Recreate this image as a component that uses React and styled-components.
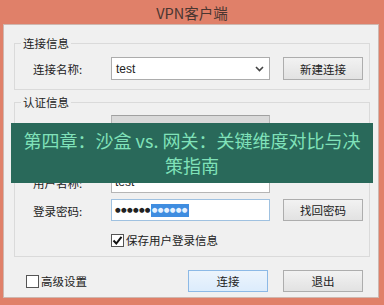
import React from 'react'
import styled, { createGlobalStyle } from 'styled-components'

const GlobalStyle = createGlobalStyle`
    body{
        margin:0;
        font-family: "Noto Sans CJK SC", "Liberation Sans", sans-serif;
        color:#1e1e1e;
    }
`

function App() {
    return (
        <>
            <GlobalStyle />
            <Window>
                <TitleBar>VPN客户端</TitleBar>
                <Client>
                    <Group>
                        <Legend>连接信息</Legend>
                        <GroupBody $top={7} $bottom={9}>
                            <Row $h={23}>
                                <Label>连接名称:</Label>
                                <Combo>
                                    <span>test</span>
                                    <Chevron />
                                </Combo>
                                <Button>新建连接</Button>
                            </Row>
                        </GroupBody>
                    </Group>

                    <Group $mt={5}>
                        <Legend>认证信息</Legend>
                        <GroupBody $top={6} $bottom={9} $gap={6}>
                            <Row $h={22}>
                                <span />
                                <Field $disabled />
                            </Row>
                            <Row $h={22}>
                                <span />
                                <Field />
                            </Row>
                            <Row $h={22}>
                                <Label>用户名称:</Label>
                                <Field>test</Field>
                            </Row>
                            <Row $h={22}>
                                <Label>登录密码:</Label>
                                <Field $focus>
                                    <Dots>●●●●●●</Dots>
                                    <Selected>●●●●●●</Selected>
                                </Field>
                                <Button>找回密码</Button>
                            </Row>
                            <CheckRow $indent={78} $mt={6}>
                                <CheckBox $checked />
                                保存用户登录信息
                            </CheckRow>
                        </GroupBody>
                    </Group>

                    <Footer>
                        <CheckRow $indent={0}>
                            <CheckBox />
                            高级设置
                        </CheckRow>
                        <FooterButtons>
                            <Button $primary>连接</Button>
                            <Button>退出</Button>
                        </FooterButtons>
                    </Footer>
                </Client>

                <Banner>第四章：沙盒 vs. 网关：关键维度对比与决策指南</Banner>
            </Window>
        </>
    )
}

export default App

function Chevron() {
    return (
        <svg width="9" height="6" viewBox="0 0 9 6">
            <path d="M1 1 L4.5 4.5 L8 1" fill="none" stroke="#444" strokeWidth="1.6" />
        </svg>
    )
}

function CheckBox({ $checked }) {
    return (
        <Box>
            {$checked &&
                <svg width="11" height="11" viewBox="0 0 11 11">
                    <path d="M1.5 5.5 L4.3 8.5 L9.5 1.8" fill="none" stroke="#111" strokeWidth="2" />
                </svg>
            }
        </Box>
    )
}

const Window = styled.div`
    position:relative;
    width:384px;
    height:305px;
    background:#e08069;
    display:flex;
    flex-direction:column;
    font-size:11.5px;
`

const TitleBar = styled.div`
    height:24px;
    display:flex;
    align-items:center;
    justify-content:center;
    font-size:14.5px;
    color:#4a3631;
    padding-top:1px;
    box-sizing:border-box;
`

const Client = styled.div`
    flex:1;
    margin:0 5px 7px 3px;
    background:#f0f0f0;
    border:1px solid #cfb7af;
    padding:11px 8px 0 10px;
    display:flex;
    flex-direction:column;
`

const Group = styled.fieldset`
    margin:${p => p.$mt || 0}px 0 0 0;
    padding:0;
    border:1px solid #dadada;
    min-width:0;
`

const Legend = styled.legend`
    margin-left:6px;
    padding:0 2px;
    line-height:14px;
    color:#222;
`

const GroupBody = styled.div`
    display:flex;
    flex-direction:column;
    gap:${p => p.$gap || 0}px;
    padding:${p => p.$top}px 6px ${p => p.$bottom}px 18px;
`

const Row = styled.div`
    display:grid;
    grid-template-columns: 65px 159px 80px;
    column-gap:13px;
    height:${p => p.$h}px;
    align-items:center;
`

const Label = styled.span`
    color:#222;
    padding-top:1px;
`

const Combo = styled.div`
    height:100%;
    box-sizing:border-box;
    border:1px solid #acacac;
    background:#fff;
    display:flex;
    align-items:center;
    justify-content:space-between;
    padding:0 5px 0 4px;
    font-family:"Liberation Sans", sans-serif;
    font-size:12px;
`

const Field = styled.div`
    height:100%;
    box-sizing:border-box;
    border:1px solid ${p => p.$focus ? '#9fc1e0' : '#b5b5b5'};
    border-top-color:${p => p.$disabled ? '#a0a0a0' : p.$focus ? '#9fc1e0' : '#b5b5b5'};
    background:${p => p.$disabled ? '#d9d9d9' : '#fff'};
    display:flex;
    align-items:center;
    padding:0 3px;
    font-family:"Liberation Sans", sans-serif;
    font-size:12px;
    color:#222;
`

const Dots = styled.span`
    font-family:"DejaVu Sans", sans-serif;
    font-size:6.5px;
    letter-spacing:0.3px;
    line-height:13px;
`

const Selected = styled(Dots)`
    background:#3f8de0;
    color:#e6f2ff;
    padding:0 1px;
`

const Button = styled.div`
    height:100%;
    box-sizing:border-box;
    display:flex;
    align-items:center;
    justify-content:center;
    border:1px solid ${p => p.$primary ? '#8cb9e6' : '#adadad'};
    background:${p => p.$primary
        ? 'linear-gradient(#ecf4fc, #dcecfc)'
        : 'linear-gradient(#f2f2f2, #e2e2e2)'};
    color:#222;
    font-size:11.5px;
`

const CheckRow = styled.label`
    display:flex;
    align-items:center;
    gap:2px;
    margin:${p => p.$mt || 0}px 0 0 ${p => p.$indent}px;
    height:14px;
    color:#222;
`

const Box = styled.span`
    width:13px;
    height:13px;
    box-sizing:border-box;
    border:1px solid #555;
    background:#fff;
    display:flex;
    align-items:center;
    justify-content:center;
`

const Footer = styled.div`
    display:flex;
    align-items:center;
    justify-content:space-between;
    margin-top:13px;
    padding:0 7px 0 12px;
`

const FooterButtons = styled.div`
    display:flex;
    gap:15px;
    height:22px;
    div{
        width:80px;
    }
`

const Banner = styled.div`
    position:absolute;
    left:11px;
    top:123px;
    width:362px;
    height:60px;
    box-sizing:border-box;
    padding:0 12px;
    background:#29695a;
    color:#80e2b9;
    font-size:18px;
    line-height:25px;
    text-align:center;
    display:flex;
    align-items:center;
    justify-content:center;
`
